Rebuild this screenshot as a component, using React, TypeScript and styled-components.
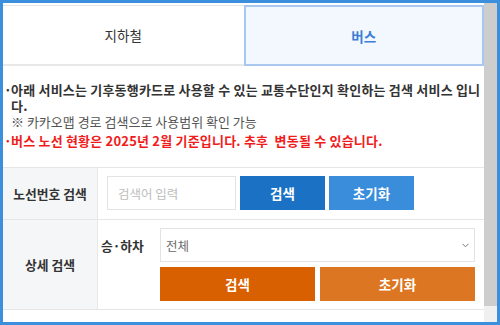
import React from "react";
import styled, { createGlobalStyle } from "styled-components";

const GlobalStyle = createGlobalStyle`
  html, body { margin: 0; padding: 0; background: #ffffff; }
  body { font-family: "Noto Sans CJK KR", "Noto Sans", sans-serif; }
  * { box-sizing: border-box; }
`;

const Frame = styled.div`
  width: 500px;
  height: 325px;
  border: 3px solid #3c8fdc;
  display: flex;
  background: #ffffff;
  overflow: hidden;
`;

const Content = styled.div`
  flex: 1;
  display: flex;
  flex-direction: column;
  min-width: 0;
`;

const ScrollBar = styled.div`
  width: 13px;
  display: flex;
  flex-direction: column;
  background: #f0f0f0;
`;

const Thumb = styled.div`
  height: 303px;
  background: #cdcdcd;
`;

const TabList = styled.div`
  margin-top: 2px;
  display: grid;
  grid-template-columns: 1fr 1fr;
`;

const Tab = styled.div<{ $active?: boolean }>`
  height: 61px;
  display: flex;
  align-items: center;
  justify-content: center;
  font-size: 13.5px;
  font-weight: ${(p) => (p.$active ? 700 : 400)};
  color: ${(p) => (p.$active ? "#3b7fd6" : "#333333")};
  background: ${(p) => (p.$active ? "#f3f8fe" : "#ffffff")};
  border: ${(p) => (p.$active ? "2px solid #a8c8f0" : "none")};
  border-top: ${(p) => (p.$active ? "2px solid #a8c8f0" : "1px solid #e6e6e6")};
  border-bottom: 2px solid ${(p) => (p.$active ? "#a8c8f0" : "#e8e8e8")};
`;

const Notice = styled.ul`
  list-style: none;
  margin: 0;
  padding: 16px 0 0 0;
  font-size: 13px;
  line-height: 16px;
`;

const NoticeItem = styled.li<{ $red?: boolean }>`
  display: grid;
  grid-template-columns: 8px 1fr;
  color: ${(p) => (p.$red ? "#f01c1c" : "#333333")};
  font-weight: 700;
  letter-spacing: 0.2px;
  & + & {
    margin-top: 3px;
  }
`;

const Bullet = styled.span`
  padding-left: 1px;
`;

const SubNote = styled.span`
  display: block;
  font-weight: 400;
  color: #555555;
  letter-spacing: 0;
`;

const Table = styled.div`
  margin-top: 18px;
  border-top: 1px solid #e6e6e6;
`;

const Row = styled.div`
  display: grid;
  grid-template-columns: 95px 1fr;
  border-bottom: 1px solid #e6e6e6;
`;

const HeadCell = styled.div`
  background: #f5f6f8;
  border-right: 1px solid #e8e8e8;
  display: flex;
  align-items: center;
  justify-content: center;
  font-size: 12.8px;
  font-weight: 700;
  color: #333333;
`;

const SearchCell = styled.div`
  padding: 8px 9px 9px 9px;
  display: flex;
  gap: 4px;
`;

const TextInput = styled.input`
  width: 129px;
  height: 34px;
  border: 1px solid #e3e3e3;
  padding: 0 10px;
  font-family: inherit;
  font-size: 12.5px;
  color: #333333;
  outline: none;
  &::placeholder {
    color: #bdbdbd;
  }
`;

const Button = styled.button<{ $tone: "blue" | "lightBlue" | "orange" | "lightOrange" }>`
  height: 34px;
  border: none;
  padding: 0;
  font-family: inherit;
  font-size: 13.5px;
  font-weight: 700;
  color: #ffffff;
  cursor: pointer;
  background: ${(p) =>
    ({
      blue: "#1b71c4",
      lightBlue: "#3a8ddb",
      orange: "#d96000",
      lightOrange: "#dc7622",
    })[p.$tone]};
`;

const SmallButton = styled(Button)`
  width: 85px;
`;

const DetailCell = styled.div`
  padding: 8px 9px 8px 3px;
  display: grid;
  grid-template-columns: 59px 1fr;
  grid-template-rows: 34px 34px;
  row-gap: 5px;
`;

const FieldLabel = styled.div`
  display: flex;
  align-items: center;
  font-size: 12.8px;
  font-weight: 700;
  color: #333333;
`;

const SelectWrap = styled.div`
  position: relative;
`;

const Select = styled.select`
  appearance: none;
  width: 100%;
  height: 34px;
  border: 1px solid #e3e3e3;
  background: #ffffff;
  padding: 0 20px 0 5px;
  font-family: inherit;
  font-size: 12.5px;
  color: #6a6a6a;
  outline: none;
`;

const Chevron = styled.svg`
  position: absolute;
  right: 6px;
  top: 15px;
  pointer-events: none;
`;

const ButtonGroup = styled.div`
  grid-column: 2;
  display: grid;
  grid-template-columns: 1fr 1fr;
  gap: 5px;
`;

export default function App() {
  return (
    <>
      <GlobalStyle />
      <Frame>
        <Content>
          <TabList>
            <Tab>지하철</Tab>
            <Tab $active>버스</Tab>
          </TabList>
          <Notice>
            <NoticeItem>
              <Bullet>·</Bullet>
              <span>
                아래 서비스는 기후동행카드로 사용할 수 있는 교통수단인지 확인하는 검색 서비스 입니다.
                <SubNote>※ 카카오맵 경로 검색으로 사용범위 확인 가능</SubNote>
              </span>
            </NoticeItem>
            <NoticeItem $red>
              <Bullet>·</Bullet>
              <span>버스 노선 현황은 2025년 2월 기준입니다. 추후{"\u00a0"} 변동될 수 있습니다.</span>
            </NoticeItem>
          </Notice>
          <Table>
            <Row>
              <HeadCell>노선번호 검색</HeadCell>
              <SearchCell>
                <TextInput placeholder="검색어 입력" />
                <SmallButton $tone="blue">검색</SmallButton>
                <SmallButton $tone="lightBlue">초기화</SmallButton>
              </SearchCell>
            </Row>
            <Row>
              <HeadCell>상세 검색</HeadCell>
              <DetailCell>
                <FieldLabel>승·하차</FieldLabel>
                <SelectWrap>
                  <Select defaultValue="all">
                    <option value="all">전체</option>
                    <option value="on">승차</option>
                    <option value="off">하차</option>
                  </Select>
                  <Chevron width="7" height="5" viewBox="0 0 7 5">
                    <path d="M0.5 0.8 L3.5 3.8 L6.5 0.8" fill="none" stroke="#777" strokeWidth="1" />
                  </Chevron>
                </SelectWrap>
                <ButtonGroup>
                  <Button $tone="orange">검색</Button>
                  <Button $tone="lightOrange">초기화</Button>
                </ButtonGroup>
              </DetailCell>
            </Row>
          </Table>
        </Content>
        <ScrollBar>
          <Thumb />
        </ScrollBar>
      </Frame>
    </>
  );
}
